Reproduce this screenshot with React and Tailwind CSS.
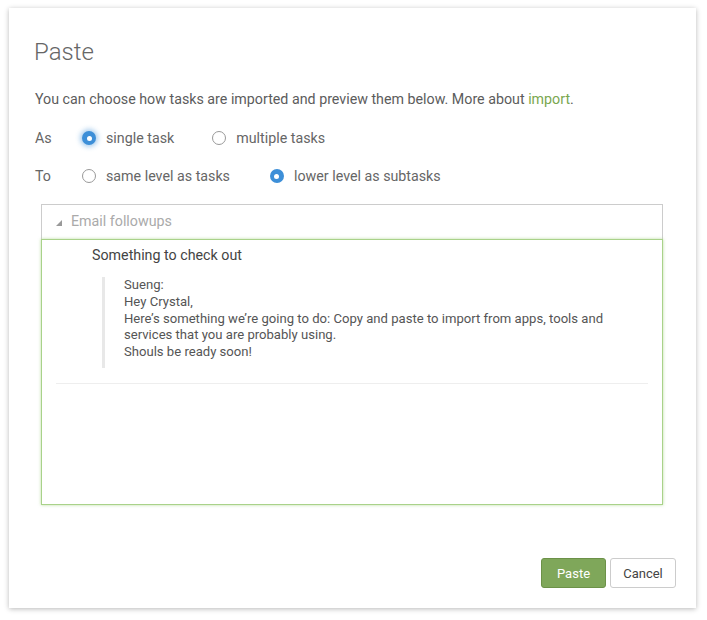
import React from 'react';

function Radio({ checked, focus }) {
    if (checked) {
        return (
            <span className={`relative inline-flex h-[14px] w-[14px] shrink-0 items-center justify-center rounded-full bg-[#3d8fd8] ${focus ? 'shadow-[0_0_5px_2px_rgba(61,143,216,0.45)]' : ''}`}>
                <span className="h-[5px] w-[5px] rounded-full bg-white" />
            </span>
        );
    }
    return <span className="inline-block h-[14px] w-[14px] shrink-0 rounded-full border border-[#999] bg-white" />;
}

function Option({ checked, focus, label, className = '' }) {
    return (
        <label className={`flex items-center gap-[10px] ${className}`}>
            <Radio checked={checked} focus={focus} />
            <span>{label}</span>
        </label>
    );
}

export default function App() {
    return (
        <div className="min-h-[620px] bg-white pl-[9px] pt-[8px] font-['Roboto',sans-serif]">
            <div className="flex h-[600px] w-[687px] flex-col bg-white shadow-[0_1px_5px_rgba(0,0,0,0.28)]">
                <h1 className="ml-[25px] mt-[30px] text-[24px] leading-[28px] font-light text-[#666]">Paste</h1>

                <p className="ml-[26px] mt-[23px] text-[14.25px] leading-[20px] text-[#5c5c5c]">
                    You can choose how tasks are imported and preview them below. More about{' '}
                    <a className="text-[#7aa74f]">import</a>.
                </p>

                <div className="ml-[26px] mt-[19px] flex items-center text-[14.25px] leading-[20px] text-[#666]">
                    <span className="w-[47px]">As</span>
                    <Option checked focus label="single task" />
                    <Option label="multiple tasks" className="ml-[38px]" />
                </div>

                <div className="ml-[26px] mt-[18px] flex items-center text-[14.25px] leading-[20px] text-[#666]">
                    <span className="w-[47px]">To</span>
                    <Option label="same level as tasks" />
                    <Option checked label="lower level as subtasks" className="ml-[40px]" />
                </div>

                <div className="ml-[32px] mt-[18px] w-[622px]">
                    <div className="flex h-[35px] items-center border border-b-0 border-[#ccc] pl-[14px] text-[14.25px] text-[#aaa]">
                        <svg width="6" height="6" viewBox="0 0 6 6" className="mt-[1px]">
                            <polygon points="6,0 6,6 0,6" fill="#999" />
                        </svg>
                        <span className="ml-[9px]">Email followups</span>
                    </div>
                    <div className="h-[266px] border border-[#a9d28a] shadow-[0_0_3px_rgba(140,200,100,0.6)]">
                        <div className="ml-[50px] mt-[5px] text-[14.25px] leading-[20px] text-[#444]">Something to check out</div>
                        <div className="ml-[60px] mr-[40px] mt-[12px] border-l-[3px] border-[#e8e8e8] pb-[7px] pl-[19px] text-[13.1px] leading-[16.75px] text-[#555]">
                            Sueng:
                            <br />
                            Hey Crystal,
                            <br />
                            Here’s something we’re going to do: Copy and paste to import from apps, tools and services that you are probably using.
                            <br />
                            Shouls be ready soon!
                        </div>
                        <div className="mx-[14px] mt-[15px] border-t border-[#eee]" />
                    </div>
                </div>

                <div className="mt-auto mb-[20px] mr-[20px] flex justify-end gap-[4px] text-[13px]">
                    <button className="h-[30px] w-[65px] rounded-[3px] border border-[#6c9148] bg-[#7fa75a] pt-[1px] text-white">Paste</button>
                    <button className="h-[30px] w-[66px] rounded-[3px] border border-[#ccc] bg-white pt-[1px] text-[#444]">Cancel</button>
                </div>
            </div>
        </div>
    );
}
